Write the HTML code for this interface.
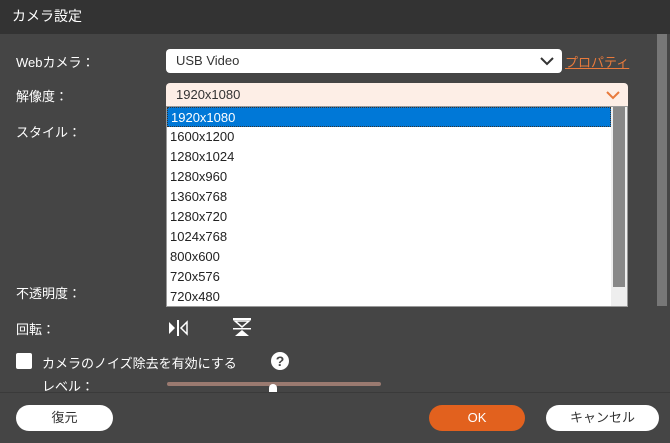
<!DOCTYPE html>
<html><head><meta charset="utf-8"><style>
*{box-sizing:border-box;margin:0;padding:0}
body{width:670px;height:443px;background:#454545;font-family:"Liberation Sans","Noto Sans CJK JP",sans-serif;color:#fff;position:relative;overflow:hidden;font-size:13px}
.abs{position:absolute}
.title{left:0;top:0;width:670px;height:34px;background:#333;font-size:14px;line-height:32px;padding-left:12px}
.lbl{left:16px;font-size:13px}
.sel{background:#fff;border-radius:4px;color:#333;padding-left:10px;line-height:24px}
.list{left:166px;top:106px;width:462px;height:201px;background:#fff;border:1px solid #999;color:#222}
.it{height:20px;line-height:20px;padding-left:3px;font-size:13px}
.btn{height:26px;border-radius:13px;background:#fff;color:#333;text-align:center;line-height:26px;font-size:13px}
</style></head><body>
<div class="abs title">カメラ設定</div>
<div class="abs" style="left:657px;top:34px;width:10px;height:272px;background:#777"></div>
<div class="abs lbl" style="top:52px">Webカメラ：</div>
<div class="abs sel" style="left:166px;top:49px;width:396px;height:24px">USB Video
<svg class="abs" style="right:8px;top:7px" width="14" height="10"><path d="M1 2 L7 8 L13 2" stroke="#333" stroke-width="2" fill="none"/></svg></div>
<div class="abs" style="left:565px;top:52px;color:#e87a3c;text-decoration:underline">プロパティ</div>
<div class="abs lbl" style="top:86px">解像度：</div>
<div class="abs sel" style="left:166px;top:83px;width:462px;height:23px;background:#fdeee6;border-radius:4px 4px 0 0;line-height:23px">1920x1080
<svg class="abs" style="right:8px;top:7px" width="14" height="10"><path d="M1 2 L7 8 L13 2" stroke="#e87a3c" stroke-width="2" fill="none"/></svg></div>
<div class="abs lbl" style="top:122px">スタイル：</div>
<div class="abs lbl" style="top:283px">不透明度：</div>
<div class="abs list">
<div class="abs" style="right:0;top:0;width:16px;height:199px;background:#eee"></div>
<div class="abs" style="right:2px;top:0;width:12px;height:180px;background:#888"></div>
<div class="it" style="background:#0078d7;color:#fff;width:444px;border:1px dotted #333">1920x1080</div>
<div class="it">1600x1200</div><div class="it">1280x1024</div><div class="it">1280x960</div><div class="it">1360x768</div><div class="it">1280x720</div><div class="it">1024x768</div><div class="it">800x600</div><div class="it">720x576</div><div class="it">720x480</div>
</div>
<div class="abs lbl" style="top:319px">回転：</div>
<svg class="abs" style="left:168px;top:319px" width="20" height="18"><path d="M1 3 L7 9 L1 15Z" fill="#fff"/><rect x="9" y="1" width="2" height="16" fill="#fff"/><path d="M19 3 L13 9 L19 15Z" fill="none" stroke="#fff" stroke-width="1.5"/></svg>
<svg class="abs" style="left:232px;top:318px" width="20" height="20"><rect x="1" y="0" width="18" height="2" fill="#fff"/><path d="M3 3 L17 3 L10 9Z" fill="none" stroke="#fff" stroke-width="1.5"/><rect x="1" y="10" width="18" height="1.5" fill="#fff"/><path d="M3 18 L17 18 L10 12Z" fill="#fff"/></svg>
<div class="abs" style="left:16px;top:353px;width:16px;height:16px;background:#fff;border-radius:2px"></div>
<div class="abs" style="left:42px;top:353px;font-size:13px">カメラのノイズ除去を有効にする</div>
<div class="abs" style="left:271px;top:352px;width:18px;height:18px;border-radius:50%;background:#fff;color:#454545;font-weight:bold;text-align:center;line-height:18px;font-size:14px">?</div>
<div class="abs" style="left:42px;top:376px">レベル：</div>
<div class="abs" style="left:167px;top:382px;width:214px;height:4px;border-radius:2px;background:#9a7a70"></div>
<div class="abs" style="left:269px;top:384px;width:8px;height:9px;border-radius:4px 4px 0 0;background:#fff"></div>
<div class="abs" style="left:0;top:392px;width:670px;height:1px;background:#3a3a3a"></div>
<div class="abs btn" style="left:16px;top:405px;width:97px">復元</div>
<div class="abs btn" style="left:429px;top:405px;width:96px;background:#e2611e;color:#fff">OK</div>
<div class="abs btn" style="left:546px;top:405px;width:113px">キャンセル</div>
</body></html>
